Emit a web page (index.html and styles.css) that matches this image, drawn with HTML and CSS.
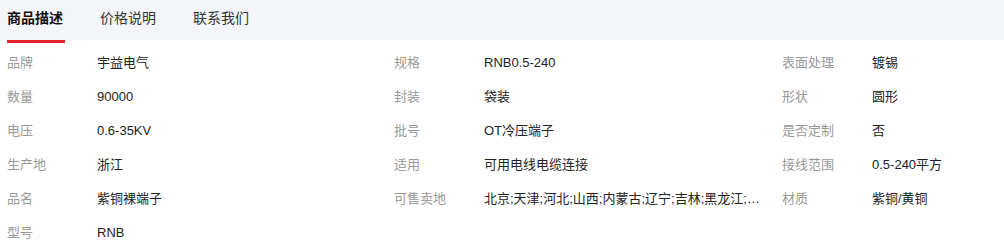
FILE: index.html
```html
<!DOCTYPE html>
<html lang="zh-CN">
<head>
    <meta charset="UTF-8">
    <meta name="viewport" content="width=device-width, initial-scale=1.0">
    <title>商品描述</title>
    <link rel="stylesheet" href="styles.css">
</head>
<body>
    <div class="tabs">
        <div class="tab active">商品描述</div>
        <div class="tab">价格说明</div>
        <div class="tab">联系我们</div>
    </div>
    <div class="attrs">
        <div class="attr"><span class="attr-name">品牌</span><span class="attr-value">宇益电气</span></div>
        <div class="attr"><span class="attr-name">规格</span><span class="attr-value">RNB0.5-240</span></div>
        <div class="attr"><span class="attr-name">表面处理</span><span class="attr-value">镀锡</span></div>
        <div class="attr"><span class="attr-name">数量</span><span class="attr-value">90000</span></div>
        <div class="attr"><span class="attr-name">封装</span><span class="attr-value">袋装</span></div>
        <div class="attr"><span class="attr-name">形状</span><span class="attr-value">圆形</span></div>
        <div class="attr"><span class="attr-name">电压</span><span class="attr-value">0.6-35KV</span></div>
        <div class="attr"><span class="attr-name">批号</span><span class="attr-value">OT冷压端子</span></div>
        <div class="attr"><span class="attr-name">是否定制</span><span class="attr-value">否</span></div>
        <div class="attr"><span class="attr-name">生产地</span><span class="attr-value">浙江</span></div>
        <div class="attr"><span class="attr-name">适用</span><span class="attr-value">可用电线电缆连接</span></div>
        <div class="attr"><span class="attr-name">接线范围</span><span class="attr-value">0.5-240平方</span></div>
        <div class="attr"><span class="attr-name">品名</span><span class="attr-value">紫铜裸端子</span></div>
        <div class="attr"><span class="attr-name">可售卖地</span><span class="attr-value">北京;天津;河北;山西;内蒙古;辽宁;吉林;黑龙江;…</span></div>
        <div class="attr"><span class="attr-name">材质</span><span class="attr-value">紫铜/黄铜</span></div>
        <div class="attr"><span class="attr-name">型号</span><span class="attr-value">RNB</span></div>
    </div>
</body>
</html>
```

FILE: styles.css
```css
body {
    margin: 0;
    font-family: "Liberation Sans", "Noto Sans CJK SC", sans-serif;
    background-color: #fff;
    color: #333;
}

.tabs {
    display: flex;
    gap: 37px;
    height: 40px;
    padding-left: 7px;
    background-color: #f4f5f9;
}

.tab {
    position: relative;
    font-size: 14px;
    line-height: 37px;
    color: #333;
}

.tab.active {
    font-weight: bold;
    color: #111;
}

/* red underline under the current tab */
.tab.active::after {
    content: "";
    position: absolute;
    left: 0;
    right: -2px;
    bottom: -3px;
    height: 3px;
    background-color: #e4262b;
}

.attrs {
    display: grid;
    grid-template-columns: 387px 388px 1fr;
    padding: 6px 0 0 7px;
    font-size: 13px;
}

.attr {
    display: flex;
    line-height: 34px;
    min-width: 0;
}

.attr-name {
    flex: 0 0 90px;
    color: #999;
}

.attr-value {
    max-width: 285px;
    color: #222;
    white-space: nowrap;
    overflow: hidden;
    text-overflow: ellipsis;
}
```
